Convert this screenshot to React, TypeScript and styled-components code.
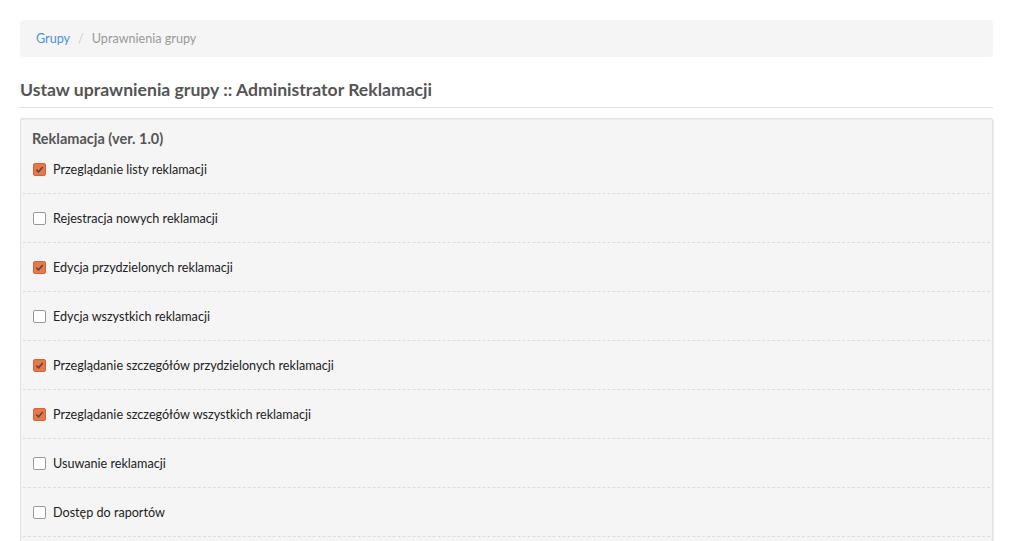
import React from 'react';
import styled, { createGlobalStyle } from 'styled-components';

const GlobalStyle = createGlobalStyle`
  body {
    margin: 0;
    background: #fff;
    font-family: Lato, "Open Sans", sans-serif;
    color: #333;
  }
`;

const Page = styled.div`
  padding: 20px 20px 0 20px;
`;

const Breadcrumb = styled.ol`
  display: flex;
  align-items: center;
  list-style: none;
  margin: 0;
  padding: 0 16px;
  height: 37px;
  background: #f5f5f5;
  border-radius: 4px;
  font-size: 12.6px;
`;

const Crumb = styled.li<{ active?: boolean }>`
  color: ${(p) => (p.active ? '#999' : '#4a90e2')};
`;

const Sep = styled.li`
  color: #ccc;
  padding: 0 8px;
`;

const Heading = styled.h3`
  margin: 22px 0 0 0;
  padding-bottom: 7px;
  font-size: 17.6px;
  font-weight: 700;
  color: #555;
  border-bottom: 1px solid #ddd;
`;

const Panel = styled.div`
  margin-top: 10px;
  background: #f5f5f5;
  border: 1px solid #e3e3e3;
  border-radius: 2px;
  box-shadow: inset 0 1px 1px rgba(0, 0, 0, 0.05), 1px 1px 1px rgba(0, 0, 0, 0.08);
  padding: 0 2px 30px 2px;
`;

const PanelTitle = styled.h4`
  margin: 0;
  padding: 10px 9px 0 9px;
  font-size: 14.5px;
  font-weight: 700;
  color: #555;
  line-height: 20px;
`;

const PermRow = styled.label<{ first?: boolean }>`
  display: flex;
  align-items: center;
  gap: 7px;
  box-sizing: border-box;
  height: ${(p) => (p.first ? '45px' : '49px')};
  padding: ${(p) => (p.first ? '0 10px 4px 10px' : '0 10px')};
  border-bottom: 1px dashed #ddd;
  font-size: 12.6px;
  color: #222;
`;

const Box = styled.span<{ checked?: boolean }>`
  display: inline-flex;
  align-items: center;
  justify-content: center;
  width: 11px;
  height: 11px;
  border-radius: 2px;
  border: 1px solid ${(p) => (p.checked ? '#d4643a' : '#999')};
  background: ${(p) => (p.checked ? '#e8774a' : '#fff')};
  flex-shrink: 0;
`;

const perms = [
  { label: 'Przeglądanie listy reklamacji', on: true },
  { label: 'Rejestracja nowych reklamacji', on: false },
  { label: 'Edycja przydzielonych reklamacji', on: true },
  { label: 'Edycja wszystkich reklamacji', on: false },
  { label: 'Przeglądanie szczegółów przydzielonych reklamacji', on: true },
  { label: 'Przeglądanie szczegółów wszystkich reklamacji', on: true },
  { label: 'Usuwanie reklamacji', on: false },
  { label: 'Dostęp do raportów', on: false },
];

const Check = ({ on }: { on: boolean }) => (
  <Box checked={on}>
    {on && (
      <svg width="9" height="9" viewBox="0 0 10 10">
        <path d="M1.5 5.2 L4 7.6 L8.6 2.2" fill="none" stroke="#5a4a44" strokeWidth="1.8" />
      </svg>
    )}
  </Box>
);

const App = () => {
  return (
    <Page>
      <GlobalStyle />
      <Breadcrumb>
        <Crumb>Grupy</Crumb>
        <Sep>/</Sep>
        <Crumb active>Uprawnienia grupy</Crumb>
      </Breadcrumb>
      <Heading>Ustaw uprawnienia grupy :: Administrator Reklamacji</Heading>
      <Panel>
        <PanelTitle>Reklamacja (ver. 1.0)</PanelTitle>
        {perms.map((p, i) => (
          <PermRow key={i} first={i === 0}>
            <Check on={p.on} />
            {p.label}
          </PermRow>
        ))}
      </Panel>
    </Page>
  );
};

export default App;
